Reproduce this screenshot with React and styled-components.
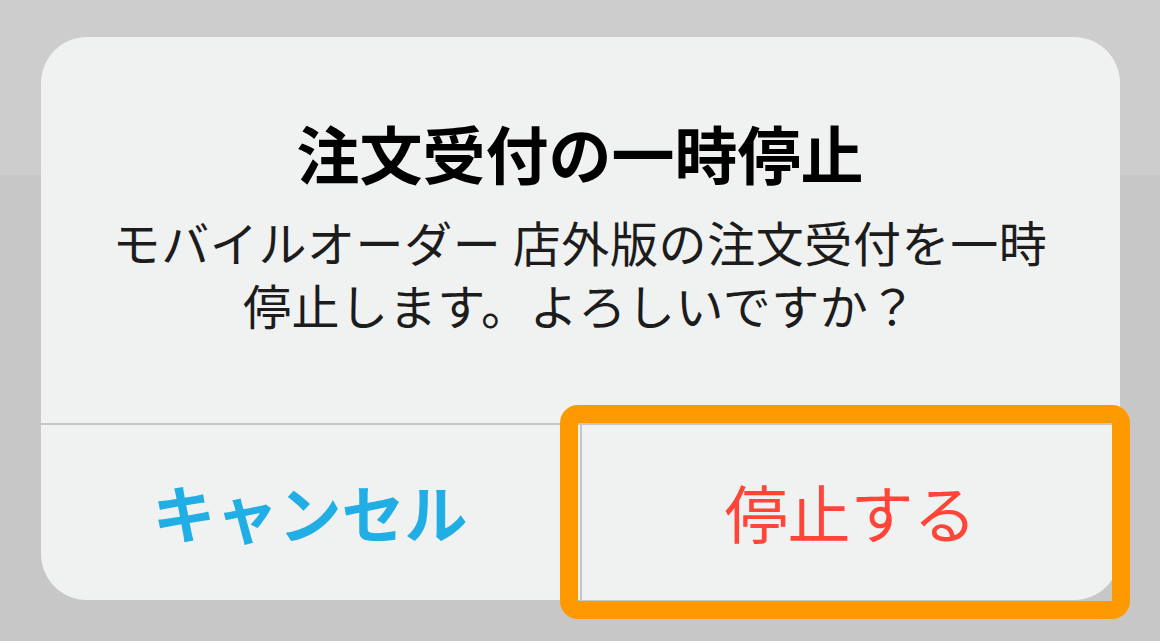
import React from "react";
import styled, { createGlobalStyle } from "styled-components";

const GlobalStyle = createGlobalStyle`
  html, body {
    margin: 0;
    padding: 0;
    height: 100%;
  }
  body {
    background: linear-gradient(#cdcdcd 0, #cdcdcd 175px, #c7c7c7 175px, #c7c7c7 100%);
    font-family: "Noto Sans CJK JP", "Noto Sans", sans-serif;
    overflow: hidden;
  }
`;

const Screen = styled.div`
  width: 1160px;
  height: 641px;
  display: flex;
  justify-content: center;
  align-items: flex-start;
  padding-top: 37px;
  box-sizing: border-box;
`;

const Alert = styled.div`
  width: 1079px;
  height: 563px;
  background: #f0f1f1;
  border-radius: 46px;
  display: flex;
  flex-direction: column;
  box-sizing: border-box;
`;

const Content = styled.div`
  flex: 1;
  display: flex;
  flex-direction: column;
  align-items: center;
  padding-top: 77px;
  box-sizing: border-box;
`;

const Title = styled.h1`
  margin: 0;
  font-size: 63px;
  line-height: 76px;
  font-weight: 700;
  color: #000;
  text-align: center;
`;

const Message = styled.div`
  margin-top: 20px;
  display: flex;
  flex-direction: column;
  align-items: center;
`;

const MessageLine = styled.span`
  display: block;
  font-size: 48px;
  line-height: 62.5px;
  letter-spacing: 0.6px;
  font-weight: 400;
  color: #1c1c1c;
  text-align: center;
  white-space: nowrap;
`;

const Actions = styled.div`
  height: 177px;
  display: grid;
  grid-template-columns: 539px 2px 1fr;
  border-top: 2px solid #c6c6c6;
  box-sizing: border-box;
`;

const Divider = styled.div`
  background: #c6c6c6;
`;

const ActionButton = styled.button`
  position: relative;
  border: 0;
  margin: 0;
  padding: 0 0 4px;
  background: transparent;
  font-family: "Noto Sans CJK JP", "Noto Sans", sans-serif;
  font-size: 63px;
  line-height: 1;
  font-weight: ${(p) => (p.$bold ? 700 : 400)};
  color: ${(p) => p.$color};
  display: flex;
  align-items: center;
  justify-content: center;
  cursor: pointer;
`;

const Highlight = styled.span`
  position: absolute;
  left: -22px;
  top: -20px;
  width: 570px;
  height: 214px;
  border: 18px solid #ff9900;
  border-radius: 18px;
  box-sizing: border-box;
  pointer-events: none;
`;

export default function App() {
  return (
    <>
      <GlobalStyle />
      <Screen>
        <Alert>
          <Content>
            <Title>注文受付の一時停止</Title>
            <Message>
              <MessageLine>モバイルオーダー 店外版の注文受付を一時</MessageLine>
              <MessageLine>停止します。よろしいですか？</MessageLine>
            </Message>
          </Content>
          <Actions>
            <ActionButton $bold $color="#20aee5">
              キャンセル
            </ActionButton>
            <Divider />
            <ActionButton $color="#ff4438">
              停止する
              <Highlight />
            </ActionButton>
          </Actions>
        </Alert>
      </Screen>
    </>
  );
}
